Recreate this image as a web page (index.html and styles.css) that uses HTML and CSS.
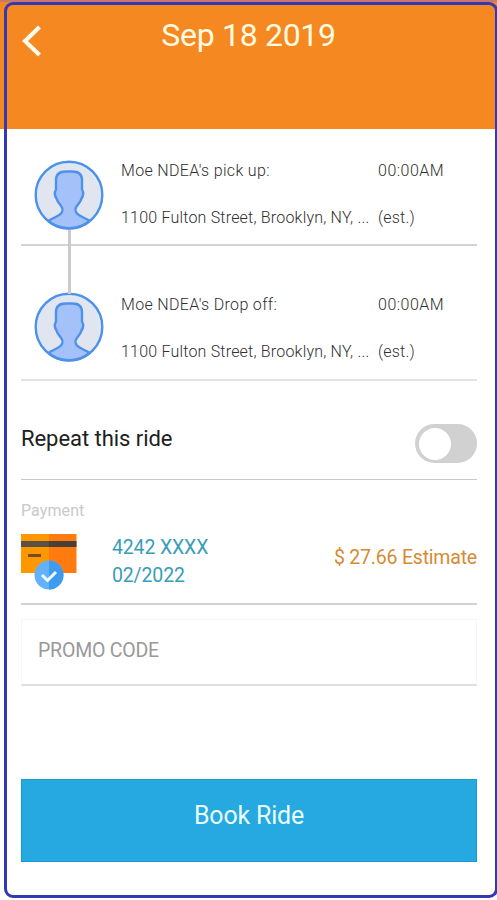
FILE: index.html
```html
<!DOCTYPE html>
<html lang="en">
<head>
<meta charset="utf-8">
<title>Book Ride</title>
<link rel="stylesheet" href="styles.css">
</head>
<body>
<svg class="defs" width="0" height="0" aria-hidden="true">
  <symbol id="person" viewBox="0 0 70 70">
    <circle cx="35" cy="35" r="33.5" fill="#e0e5f0"/>
    <path d="M14.500 61C18 58 24 57 27 53.500C30 50 28.500 47.500 26 44.500C24 42 23 40.500 22.500 38.500C20.500 35.500 20.500 32 22 29.500V20C22 14 26 11.500 32 11.500H38C44 11.500 48 14 48 20V29.500C49.500 32 49.500 35.500 47.500 38.500C47 40.500 46 42 44 44.500C41.500 47.500 40 50 43 53.500C46 57 52 58 55.500 61Q47 68.500 35 68.500T14.500 61Z" fill="#a4c1fa" stroke="#4d91e9" stroke-width="2.400"/>
    <circle cx="35" cy="35" r="31.500" fill="none" stroke="#dbebff" stroke-width="1.500" stroke-dasharray="140 58" stroke-dashoffset="-79"/>
    <circle cx="35" cy="35" r="33.300" fill="none" stroke="#4d91e9" stroke-width="2.400"/>
  </symbol>
</svg>
<div class="screen">
  <header class="header">
    <svg class="back" width="20" height="32" viewBox="0 0 20 32"><path d="M17.500 2L3 16L17.500 30" fill="none" stroke="#fffdf2" stroke-width="4.200"/></svg>
    <h1 class="title">Sep 18 2019</h1>
  </header>
  <main class="content">
    <section class="stop pickup">
      <svg class="avatar"><use href="#person"/></svg>
      <div class="details">
        <span class="name">Moe NDEA's pick up:</span><span class="time">00:00AM</span>
        <span class="address">1100 Fulton Street, Brooklyn, NY, ...</span><span class="est">(est.)</span>
      </div>
      <i class="connector"></i>
    </section>
    <section class="stop dropoff">
      <svg class="avatar"><use href="#person"/></svg>
      <div class="details">
        <span class="name">Moe NDEA's Drop off:</span><span class="time">00:00AM</span>
        <span class="address">1100 Fulton Street, Brooklyn, NY, ...</span><span class="est">(est.)</span>
      </div>
    </section>
    <section class="repeat">
      <span class="repeat-label">Repeat this ride</span>
      <span class="toggle"><i class="knob"></i></span>
    </section>
    <section class="payment">
      <div class="payment-label">Payment</div>
      <div class="payment-row">
        <svg class="card-icon" width="56" height="56" viewBox="0 0 56 56">
          <path fill="#ff9800" d="M0 0h28v39H0z"/><path fill="#ff7b10" d="M28 0h27.500v39H28z"/>
          <path fill="#5b5146" d="M0 7h28v6H0z"/><path fill="#493f36" d="M28 7h27.500v6H28z"/>
          <path fill="#705021" d="M7 20h13v3H7z"/>
          <circle cx="28" cy="41" r="14.500" fill="#61b2fb"/><path fill="#3f9bf0" d="M28 26.500a14.500 14.500 0 0 1 0 29z"/>
          <path d="M21 41l5.500 5.500L35 38" fill="none" stroke="#effbff" stroke-width="3"/>
        </svg>
        <div class="card-info"><div class="number">4242 XXXX</div><div class="expiry">02/2022</div></div>
        <div class="estimate">$ 27.66 Estimate</div>
      </div>
    </section>
    <div class="promo">PROMO CODE</div>
    <button class="book">Book Ride</button>
  </main>
  <div class="frame"></div>
</div>
</body>
</html>
```
FILE: styles.css
```css
* { box-sizing: border-box; }
body { margin: 0; background: #fff; font-family: Roboto, sans-serif; }
.defs { position: absolute; }
.screen { position: relative; height: 900px; overflow: hidden; }
.frame { position: absolute; top: 2px; left: 4px; width: 494px; height: 896px; border: 3px solid #3438b2; border-radius: 9px; pointer-events: none; }
.header { height: 129px; background: #f58820; border-top: 2px solid #c97870; display: grid; grid-template-columns: 22px 1fr 22px; align-items: start; }
.back { margin: 23px 0 0 22px; }
.title { margin: 14px 0 0; text-align: center; font-size: 32px; line-height: 38px; font-weight: 400; letter-spacing: -0.3px; color: #fffbe0; white-space: nowrap; }
.content { padding: 0 20px 0 21px; }
.stop { position: relative; display: flex; border-bottom: 2px solid #d4d4d4; }
.pickup { height: 117px; padding-top: 31px; }
.dropoff { height: 135px; padding-top: 46px; border-color: #e3e3e3; }
.avatar { width: 70px; height: 70px; margin-left: 13px; flex: none; }
.details { display: grid; grid-template-columns: 257px 1fr; grid-template-rows: 20px 20px; row-gap: 27px; margin: 1px 0 0 17px; font-size: 16px; line-height: 20px; color: #303030; white-space: nowrap; font-weight: 300; letter-spacing: 0.2px; }
.name { letter-spacing: 0.33px; }
.time { letter-spacing: 0.5px; }
.dropoff .details { margin-top: 3px; }
.connector { position: absolute; left: 47px; top: 101px; width: 3px; height: 64px; background: #cbcbcb; z-index: 1; }
.repeat { display: flex; justify-content: space-between; height: 99px; padding-top: 43px; border-bottom: 1px solid #c8c8c8; }
.repeat-label { margin-top: 1px; font-size: 22px; line-height: 28px; letter-spacing: -0.05px; color: #202020; }
.toggle { width: 62px; height: 39px; border-radius: 20px; background: #d1d1d1; padding: 3.500px; }
.knob { display: block; width: 32px; height: 32px; border-radius: 50%; background: #fff; }
.payment { height: 125px; padding-top: 20px; border-bottom: 2px solid #d2d2d2; }
.payment-label { font-size: 16px; line-height: 22px; letter-spacing: 0.1px; color: #c9c9c9; }
.payment-row { display: flex; margin-top: 12px; }
.card-info { margin: 0 0 0 35px; font-size: 19.500px; line-height: 28px; letter-spacing: -0.15px; color: #389eb8; }
.estimate { margin: 10px 0 0 auto; font-size: 19.500px; line-height: 28px; letter-spacing: -0.2px; color: #d58b32; }
.promo { margin-top: 14px; height: 67px; border: 1px solid #f6f6f6; border-bottom: 2px solid #dfdfdf; padding: 17px 16px; font-size: 19.500px; line-height: 28px; letter-spacing: -0.2px; color: #999; }
.book { display: block; width: 100%; height: 83px; margin-top: 93px; padding: 0 0 10px; border: 1px solid #159bce; background: #26a8e0; color: #e8ffff; font: 400 25px Roboto, sans-serif; letter-spacing: -0.2px; }
```
